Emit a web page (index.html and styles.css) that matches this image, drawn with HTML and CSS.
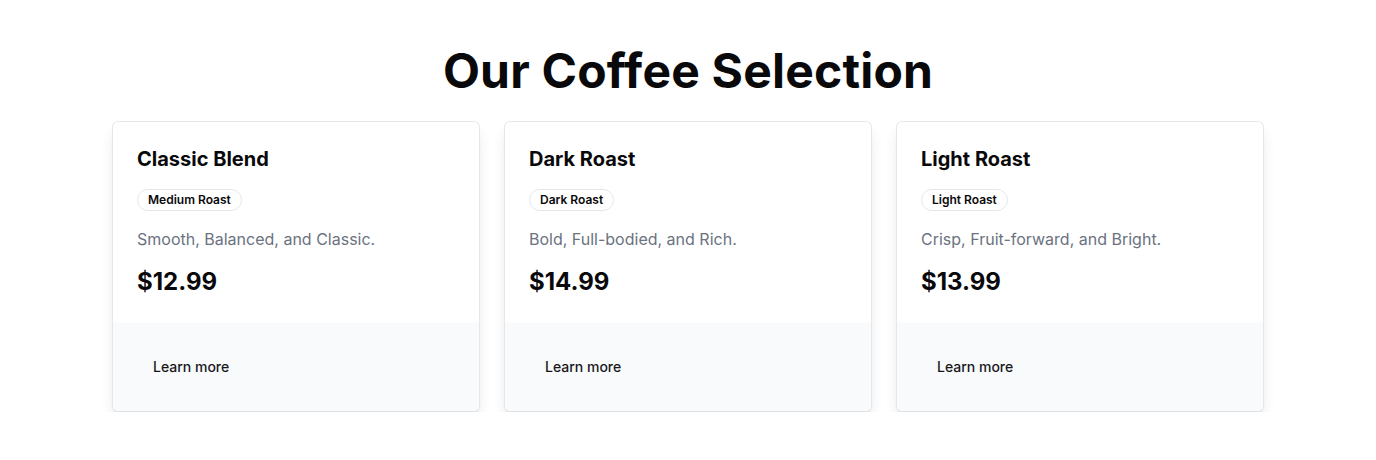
FILE: index.html
```html
<!DOCTYPE html>
<html lang="en">
<head>
<meta charset="utf-8">
<title>Our Coffee Selection</title>
<link rel="stylesheet" href="styles.css">
</head>
<body>
<main class="section">
  <h1 class="heading">Our Coffee Selection</h1>
  <div class="grid">
    <article class="card">
      <div class="card-body">
        <h2 class="card-title">Classic Blend</h2>
        <span class="badge">Medium Roast</span>
        <p class="desc">Smooth, Balanced, and Classic.</p>
        <p class="price">$12.99</p>
      </div>
      <div class="card-footer"><button class="btn">Learn more</button></div>
    </article>
    <article class="card">
      <div class="card-body">
        <h2 class="card-title">Dark Roast</h2>
        <span class="badge">Dark Roast</span>
        <p class="desc">Bold, Full-bodied, and Rich.</p>
        <p class="price">$14.99</p>
      </div>
      <div class="card-footer"><button class="btn">Learn more</button></div>
    </article>
    <article class="card">
      <div class="card-body">
        <h2 class="card-title">Light Roast</h2>
        <span class="badge">Light Roast</span>
        <p class="desc">Crisp, Fruit-forward, and Bright.</p>
        <p class="price">$13.99</p>
      </div>
      <div class="card-footer"><button class="btn">Learn more</button></div>
    </article>
  </div>
</main>
</body>
</html>
```

FILE: styles.css
```css
* { box-sizing: border-box; }
html, body { margin: 0; padding: 0; background: #ffffff; }
body {
  font-family: Inter, "Noto Sans", sans-serif;
  color: #09090b;
}
.section {
  max-width: 1200px;
  margin: 0 auto;
  padding: 42px 24px 0;
}
.heading {
  margin: 0 0 22px;
  text-align: center;
  font-size: 48px;
  line-height: 57px;
  font-weight: 700;
  letter-spacing: 0.2px;
}
.grid {
  display: grid;
  grid-template-columns: repeat(3, 1fr);
  gap: 24px;
}
.card {
  display: flex;
  flex-direction: column;
  border: 1px solid #e5e7eb;
  border-bottom-color: #dcdfe4;
  border-radius: 6px;
  background: #fff;
  overflow: hidden;
  box-shadow: 0 10px 15px -3px rgba(0,0,0,0.1), 0 4px 6px -4px rgba(0,0,0,0.1);
}
.card-body {
  display: flex;
  flex-direction: column;
  align-items: flex-start;
  padding: 23px 24px 25px;
}
.card-title {
  margin: 0;
  font-size: 20px;
  line-height: 28px;
  font-weight: 700;
}
.badge {
  margin-top: 16px;
  display: inline-block;
  padding: 2px 10px;
  border: 1px solid #e5e7eb;
  border-radius: 999px;
  font-size: 12px;
  line-height: 16px;
  font-weight: 600;
}
.desc {
  margin: 16px 0 0;
  font-size: 16px;
  line-height: 24px;
  color: #6b7280;
}
.price {
  margin: 15px 0 0;
  font-size: 24px;
  line-height: 32px;
  font-weight: 700;
}
.card-footer {
  background: #f8fafc;
  padding: 23px 24px 25px;
}
.btn {
  font-family: inherit;
  background: transparent;
  border: 0;
  height: 40px;
  padding: 0 16px;
  font-size: 14px;
  font-weight: 500;
  color: #18181b;
  border-radius: 6px;
}
```
